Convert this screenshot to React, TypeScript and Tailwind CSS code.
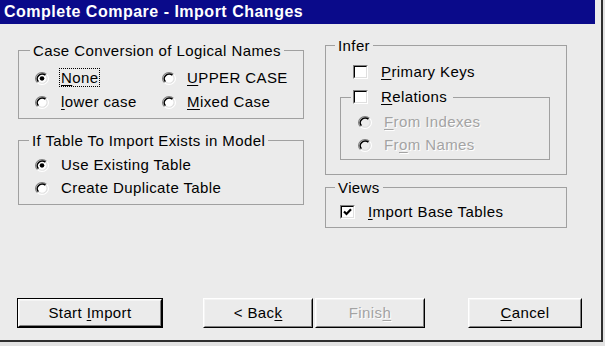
import clsx from "clsx"
import type { ReactNode } from "react"

// classic 3d radio, drawn as arcs
const Radio = ({ checked = false, disabled = false }: { checked?: boolean; disabled?: boolean }) => (
  <svg width="14" height="13" viewBox="0 0 12 12" preserveAspectRatio="none" className="shrink-0">
    <circle cx="6" cy="6" r="5" fill={disabled ? "#ececec" : "#ffffff"} />
    <path d="M2.11 9.89 A5.5 5.5 0 0 1 9.89 2.11" fill="none" stroke="#808080" />
    <path d="M9.89 2.11 A5.5 5.5 0 0 1 2.11 9.89" fill="none" stroke="#ffffff" />
    <path d="M3 9 A4.25 4.25 0 0 1 9 3" fill="none" stroke="#000000" strokeWidth="1.4" />
    <path d="M9.18 2.82 A4.5 4.5 0 0 1 2.82 9.18" fill="none" stroke="#dfdfdf" />
    {checked && <circle cx="6" cy="6" r="2" fill="#000000" />}
  </svg>
)

const Check = ({ checked = false }: { checked?: boolean }) => (
  <div className="w-[15px] h-[14px] shrink-0 border border-t-[#808080] border-l-[#808080] border-r-white border-b-white">
    <div className="w-full h-full bg-white border border-t-black border-l-black border-r-[#dfdfdf] border-b-[#dfdfdf] flex items-center justify-center">
      {checked && (
        <svg width="9" height="8" viewBox="0 0 9 8">
          <path d="M1 3.5 L3.5 6 L8 1.2" stroke="#000000" strokeWidth="2.2" fill="none" />
        </svg>
      )}
    </div>
  </div>
)

const Lbl = ({ children, focus = false, disabled = false }: { children: ReactNode; focus?: boolean; disabled?: boolean }) => (
  <span
    className={clsx(
      "border px-[1px] leading-[17px] whitespace-nowrap",
      focus ? "border-dotted border-black" : "border-transparent",
      disabled && "text-[#a3a3a3] [text-shadow:1px_1px_0_#ffffff]"
    )}
  >
    {children}
  </span>
)

const U = ({ children }: { children: ReactNode }) => (
  <span className="underline underline-offset-[2px]">{children}</span>
)

const Btn = ({ children, def = false, className }: { children: ReactNode; def?: boolean; className?: string }) => (
  <div className={clsx("h-[30px]", def && "border border-black", className)}>
    <div className="h-full border border-t-white border-l-white border-r-black border-b-black">
      <div className="h-full flex items-center justify-center border border-t-[#f4f4f4] border-l-[#f4f4f4] border-r-[#808080] border-b-[#808080]">
        <span className="whitespace-pre">{children}</span>
      </div>
    </div>
  </div>
)

export default function App() {
  return (
    <div className="w-[605px] h-[346px] bg-[#e2e2e2] overflow-hidden font-['Liberation_Sans',Arial,sans-serif] text-[15px] tracking-[0.4px] text-black">
      <div className="w-[603px] h-[342px] bg-[#ebebeb] border-r-2 border-b-2 border-[#2e2e2e] flex flex-col">
        {/* TITLE BAR */}
        <div className="w-[595px] h-[24px] shrink-0 bg-[#0a0a8a] text-white font-bold text-[16px] tracking-[0.5px] pl-[4px] flex items-center leading-none">
          Complete Compare - Import Changes
        </div>

        <div className="flex items-start">
          {/* LEFT COLUMN */}
          <div className="ml-[18px] w-[286px] pt-[18px] flex flex-col">
            <fieldset className="border border-[#a0a0a0]">
              <legend className="ml-[11px] px-[3px] leading-[17px]">Case Conversion of Logical Names</legend>
              <div className="grid grid-cols-[127px_1fr] pl-[16px] pt-[7px] pb-[4px]">
                <div className="h-[24px] flex items-center">
                  <Radio checked />
                  <span className="ml-[10px]"><Lbl focus><U>N</U>one</Lbl></span>
                </div>
                <div className="h-[24px] flex items-center">
                  <Radio />
                  <span className="ml-[9px]"><Lbl><U>U</U>PPER CASE</Lbl></span>
                </div>
                <div className="h-[24px] flex items-center">
                  <Radio />
                  <span className="ml-[10px]"><Lbl><U>l</U>ower case</Lbl></span>
                </div>
                <div className="h-[24px] flex items-center">
                  <Radio />
                  <span className="ml-[9px]"><Lbl><U>M</U>ixed Case</Lbl></span>
                </div>
              </div>
            </fieldset>

            <fieldset className="mt-[13px] border border-[#a0a0a0]">
              <legend className="ml-[10px] px-[3px] leading-[17px]">If Table To Import Exists in Model</legend>
              <div className="flex flex-col pl-[16px] pt-[5px] pb-[4px]">
                <div className="h-[23px] flex items-center">
                  <Radio checked />
                  <span className="ml-[10px]"><Lbl>Use Existing Table</Lbl></span>
                </div>
                <div className="h-[23px] flex items-center">
                  <Radio />
                  <span className="ml-[10px]"><Lbl>Create Duplicate Table</Lbl></span>
                </div>
              </div>
            </fieldset>
          </div>

          {/* RIGHT COLUMN */}
          <div className="ml-[21px] w-[242px] pt-[13px] flex flex-col">
            <fieldset className="border border-[#a0a0a0]">
              <legend className="ml-[9px] px-[3px] leading-[17px]">Infer</legend>
              <div className="flex flex-col pt-[7px] pb-[14px]">
                <div className="h-[22px] pl-[27px] flex items-center">
                  <Check />
                  <span className="ml-[11px]"><Lbl><U>P</U>rimary Keys</Lbl></span>
                </div>
                <fieldset className="mt-[4px] ml-[14px] w-[210px] border border-[#a0a0a0]">
                  <legend className="ml-[10px] pl-[2px] pr-[4px] h-[20px] flex items-center">
                    <Check />
                    <span className="ml-[11px]"><Lbl><U>R</U>elations</Lbl></span>
                  </legend>
                  <div className="flex flex-col pl-[17px] pt-[4px] pb-[2px]">
                    <div className="h-[23px] flex items-center">
                      <Radio disabled />
                      <span className="ml-[10px]"><Lbl disabled><U>F</U>rom Indexes</Lbl></span>
                    </div>
                    <div className="h-[23px] flex items-center">
                      <Radio disabled />
                      <span className="ml-[10px]"><Lbl disabled>Fr<U>o</U>m Names</Lbl></span>
                    </div>
                  </div>
                </fieldset>
              </div>
            </fieldset>

            <fieldset className="mt-[4px] border border-[#a0a0a0]">
              <legend className="ml-[9px] px-[3px] leading-[17px]">Views</legend>
              <div className="h-[22px] mt-[5px] mb-[4px] pl-[14px] flex items-center">
                <Check checked />
                <span className="ml-[11px]"><Lbl><U>I</U>mport Base Tables</Lbl></span>
              </div>
            </fieldset>
          </div>
        </div>

        {/* BUTTON ROW */}
        <div className="mt-auto pb-[12px] pl-[17px] flex">
          <Btn def className="w-[146px]">
            Start <U>I</U>mport
          </Btn>
          <Btn className="w-[110px] ml-[40px]">
            &lt; Bac<U>k</U>
          </Btn>
          <Btn className="w-[110px] ml-[2px]">
            <span className="text-[#a3a3a3] [text-shadow:1px_1px_0_#ffffff]">
              Finis<U>h</U>
            </span>
          </Btn>
          <Btn className="w-[114px] ml-[43px]">
            <U>C</U>ancel
          </Btn>
        </div>
      </div>
    </div>
  )
}
